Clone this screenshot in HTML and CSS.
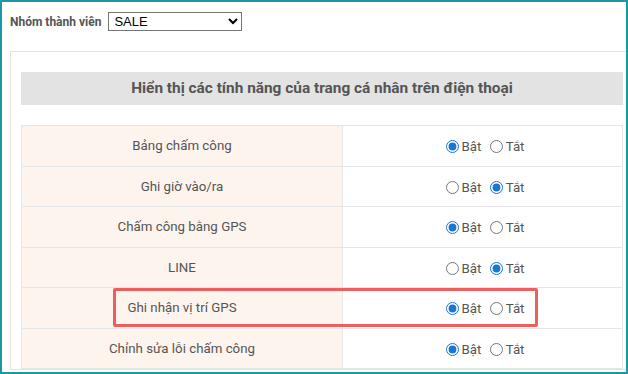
FILE: index.html
```html
<!DOCTYPE html>
<html lang="vi">
    <head>
        <meta charset="UTF-8" />
        <meta name="viewport" content="width=device-width, initial-scale=1.0" />
        <link rel="stylesheet" href="styles.css">
    </head>
    <body>
        <div class="frame">
            <div class="group-bar">
                <label class="group-label" for="group">Nhóm thành viên</label>
                <select id="group" class="group-select">
                    <option>SALE</option>
                    <option>ADMIN</option>
                </select>
            </div>

            <div class="panel">
                <div class="panel-title">Hiển thị các tính năng của trang cá nhân trên điện thoại</div>

                <div class="table-wrap">
                    <table class="features">
                        <tr>
                            <td class="name">Bảng chấm công</td>
                            <td class="switch">
                                <label><input type="radio" name="f1" checked>Bật</label>
                                <label><input type="radio" name="f1">Tắt</label>
                            </td>
                        </tr>
                        <tr>
                            <td class="name">Ghi giờ vào/ra</td>
                            <td class="switch">
                                <label><input type="radio" name="f2">Bật</label>
                                <label><input type="radio" name="f2" checked>Tắt</label>
                            </td>
                        </tr>
                        <tr>
                            <td class="name">Chấm công bằng GPS</td>
                            <td class="switch">
                                <label><input type="radio" name="f3" checked>Bật</label>
                                <label><input type="radio" name="f3">Tắt</label>
                            </td>
                        </tr>
                        <tr>
                            <td class="name">LINE</td>
                            <td class="switch">
                                <label><input type="radio" name="f4">Bật</label>
                                <label><input type="radio" name="f4" checked>Tắt</label>
                            </td>
                        </tr>
                        <tr>
                            <td class="name">Ghi nhận vị trí GPS</td>
                            <td class="switch">
                                <label><input type="radio" name="f5" checked>Bật</label>
                                <label><input type="radio" name="f5">Tắt</label>
                            </td>
                        </tr>
                        <tr>
                            <td class="name">Chỉnh sửa lỗi chấm công</td>
                            <td class="switch">
                                <label><input type="radio" name="f6" checked>Bật</label>
                                <label><input type="radio" name="f6">Tắt</label>
                            </td>
                        </tr>
                    </table>

                    <!-- annotation box over the GPS row -->
                    <div class="highlight"></div>
                </div>
            </div>
        </div>
    </body>
</html>
```

FILE: styles.css
```css
body {
    margin: 0;
    padding: 0;
}
.frame {
    width: 628px;
    height: 374px;
    box-sizing: border-box;
    border: 2px solid #1a98a8;
    padding: 10px 0 0 8px;
    overflow: hidden;
    background-color: #fff;
    font-family: Roboto, "Noto Sans", sans-serif;
    color: #555;
}
.group-bar {
    display: flex;
    align-items: center;
    gap: 7px;
    height: 19px;
}
.group-label {
    font-size: 12px;
    font-weight: bold;
}
.group-select {
    width: 134px;
    height: 19px;
    padding: 0 0 0 1px;
    border: 1px solid #767676;
    border-radius: 0;
    background-color: #fff;
    color: #000;
    font: 13px "Liberation Sans", Arial, sans-serif;
}
.panel {
    width: 602px;
    margin-top: 20px;
    padding: 20px 10px 0;
    border: 1px solid #e3e3e3;
}
.panel-title {
    height: 33px;
    line-height: 33px;
    margin-bottom: 20px;
    background-color: #e3e3e3;
    text-align: center;
    font-size: 15.4px;
    font-weight: bold;
    color: #555;
}
.table-wrap {
    position: relative;
}
.features {
    width: 602px;
    border-collapse: collapse;
    font-size: 13.3px;
}
.features tr {
    height: 40.5px;
}
.features td {
    padding: 0;
    border: 1px solid #e6e6e6;
    text-align: center;
    vertical-align: middle;
}
.features .name {
    width: 320px;
    background-color: #fdf4ee;
}
.switch label {
    color: #555;
}
.switch input {
    vertical-align: -2px;
    accent-color: #1976d2;
}
.highlight {
    position: absolute;
    left: 92px;
    top: 163px;
    width: 425px;
    height: 39px;
    box-sizing: border-box;
    border: 3px solid #eb5f5f;
    border-radius: 2px;
}
```
